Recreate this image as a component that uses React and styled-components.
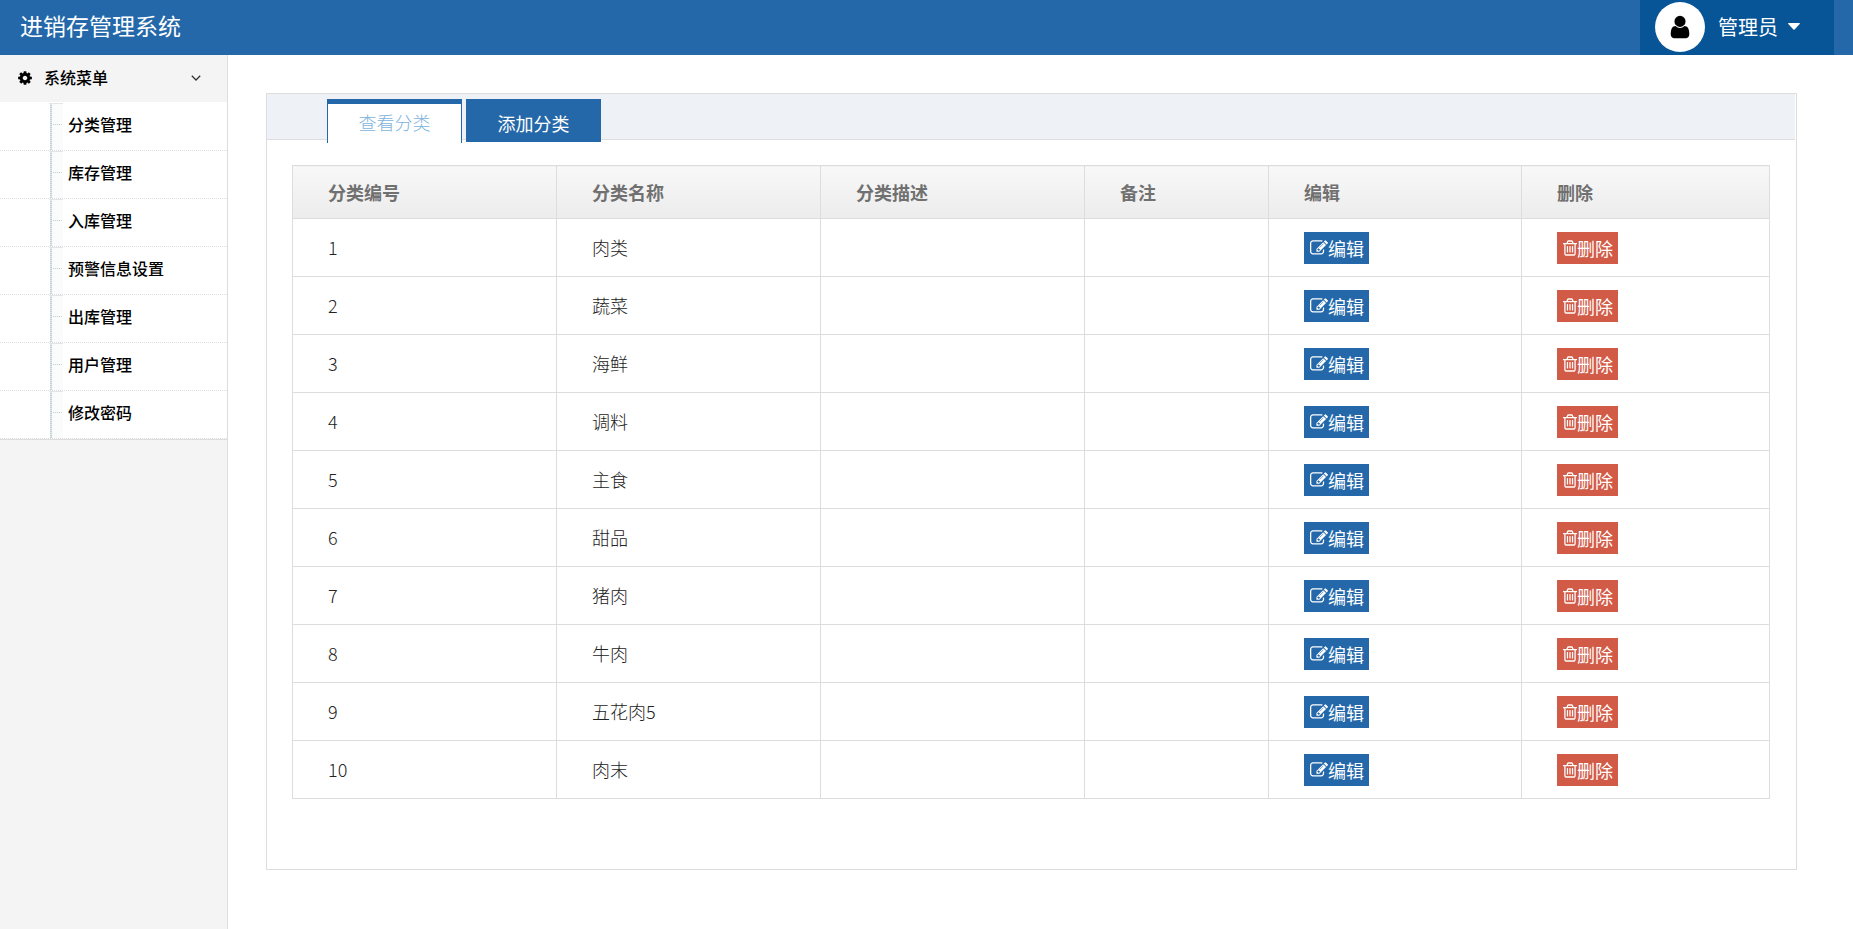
import React, { useState } from 'react'
import styled, { createGlobalStyle } from 'styled-components'

const menus = ['分类管理', '库存管理', '入库管理', '预警信息设置', '出库管理', '用户管理', '修改密码']
const tabs = ['查看分类', '添加分类']
const columns = [
  { title: '分类编号', width: 264 },
  { title: '分类名称', width: 264 },
  { title: '分类描述', width: 264 },
  { title: '备注', width: 184 },
  { title: '编辑', width: 253 },
  { title: '删除', width: 248 },
]
const categories = ['肉类', '蔬菜', '海鲜', '调料', '主食', '甜品', '猪肉', '牛肉', '五花肉5', '肉末']

const CogIcon = () => (
  <svg width="16" height="16" viewBox="0 0 1792 1792" fill="currentColor" aria-hidden="true">
    <path d="M1152 896q0-106-75-181t-181-75-181 75-75 181 75 181 181 75 181-75 75-181zm512-109v222q0 12-8 23t-20 13l-185 28q-19 54-39 91 35 50 107 138 10 12 10 25t-9 23q-27 37-99 108t-94 71q-12 0-26-9l-138-108q-44 23-91 38-16 136-29 186-7 28-36 28h-222q-14 0-24.5-8.5t-11.5-21.5l-28-184q-49-16-90-37l-141 107q-10 9-25 9-14 0-25-11-126-114-165-168-7-10-7-23 0-12 8-23 15-21 51-66.5t54-70.5q-27-50-41-99l-183-27q-13-2-21-12.5t-8-23.5v-222q0-12 8-23t19-13l186-28q14-46 39-92-40-57-107-138-10-12-10-24 0-10 9-23 26-36 98.5-107.5t94.5-71.5q13 0 26 10l138 107q44-23 91-38 16-136 29-186 7-28 36-28h222q14 0 24.5 8.5t11.5 21.5l28 184q49 16 90 37l142-107q9-9 24-9 13 0 25 10 129 119 165 170 7 8 7 22 0 12-8 23-15 21-51 66.5t-54 70.5q26 50 41 98l183 28q13 2 21 12.5t8 23.5z" />
  </svg>
)

const AngleIcon = () => (
  <svg width="10" height="6" viewBox="0 0 10 6" fill="none" stroke="#333" strokeWidth="1.3" aria-hidden="true">
    <path d="M0.8 0.8L5 5L9.2 0.8" />
  </svg>
)

const UserIcon = () => (
  <svg width="26" height="26" viewBox="0 0 1792 1792" fill="#000" aria-hidden="true">
    <path d="M1536 1399q0 109-62.5 187t-150.5 78h-854q-88 0-150.5-78t-62.5-187q0-85 8.5-160.5t31.5-152 58.5-131 94-89 134.5-34.5q131 128 313 128t313-128q76 0 134.5 34.5t94 89 58.5 131 31.5 152 8.5 160.5zm-256-887q0 159-112.5 271.5t-271.5 112.5-271.5-112.5-112.5-271.5 112.5-271.5 271.5-112.5 271.5 112.5 112.5 271.5z" />
  </svg>
)

const CaretIcon = () => (
  <svg width="12" height="7" viewBox="0 0 12 7" fill="currentColor" aria-hidden="true">
    <path d="M0.7 0H11.3Q12.3 0.3 11.7 1L6.6 6.5Q6 7 5.4 6.5L0.3 1Q-0.3 0.3 0.7 0z" />
  </svg>
)

const EditIcon = () => (
  <svg width="18" height="18" viewBox="0 0 1792 1792" fill="currentColor" aria-hidden="true">
    <path d="M888 1184l116-116-152-152-116 116v56h96v96h56zm440-720q-16-16-33 1l-350 350q-17 17-1 33t33-1l350-350q17-17 1-33zm80 594v190q0 119-84.5 203.5t-203.5 84.5h-832q-119 0-203.5-84.5t-84.5-203.5v-832q0-119 84.5-203.5t203.5-84.5h832q63 0 117 25 15 7 18 23 3 17-9 29l-49 49q-14 14-32 8-23-6-45-6h-832q-66 0-113 47t-47 113v832q0 66 47 113t113 47h832q66 0 113-47t47-113v-126q0-13 9-22l64-64q15-15 35-7t20 29zm-96-738l288 288-672 672h-288v-288zm444 132l-92 92-288-288 92-92q28-28 68-28t68 28l152 152q28 28 28 68t-28 68z" />
  </svg>
)

const TrashIcon = () => (
  <svg width="14" height="18" viewBox="192 0 1408 1792" fill="currentColor" aria-hidden="true">
    <path d="M704 736v576q0 14-9 23t-23 9h-64q-14 0-23-9t-9-23v-576q0-14 9-23t23-9h64q14 0 23 9t9 23zm256 0v576q0 14-9 23t-23 9h-64q-14 0-23-9t-9-23v-576q0-14 9-23t23-9h64q14 0 23 9t9 23zm256 0v576q0 14-9 23t-23 9h-64q-14 0-23-9t-9-23v-576q0-14 9-23t23-9h64q14 0 23 9t9 23zm128 724v-948h-896v948q0 22 7 40.5t14.5 27 10.5 8.5h832q3 0 10.5-8.5t14.5-27 7-40.5zm-672-1076h448l-48-117q-7-9-17-11h-317q-10 2-17 11zm928 32v64q0 14-9 23t-23 9h-96v948q0 83-47 143.5t-113 60.5h-832q-66 0-113-58.5t-47-141.5v-952h-96q-14 0-23-9t-9-23v-64q0-14 9-23t23-9h309l70-167q15-37 54-63t79-26h320q40 0 79 26t54 63l70 167h309q14 0 23 9t9 23z" />
  </svg>
)

const App = () => {
  const [current, setCurrent] = useState(0)
  const [open, setOpen] = useState(true)

  return (
    <Page>
      <GlobalStyle />
      <Header>
        <Title>进销存管理系统</Title>
        <UserMenu type="button">
          <Avatar>
            <UserIcon />
          </Avatar>
          管理员
          <CaretIcon />
        </UserMenu>
      </Header>
      <Body>
        <Sidebar>
          <MenuHead type="button" aria-expanded={open} onClick={() => setOpen(!open)}>
            <CogIcon />
            <MenuLabel>系统菜单</MenuLabel>
            <AngleIcon />
          </MenuHead>
          {open && (
            <SubMenu>
              {menus.map((menu) => (
                <SubItem key={menu}>
                  <SubLink href="#">{menu}</SubLink>
                </SubItem>
              ))}
            </SubMenu>
          )}
        </Sidebar>
        <Main>
          <Panel>
            <TabBar role="tablist">
              {tabs.map((tab, i) => (
                <Tab key={tab} type="button" role="tab" aria-selected={i === current} $active={i === current} onClick={() => setCurrent(i)}>
                  {tab}
                </Tab>
              ))}
            </TabBar>
            <PanelBody>
              <Table>
                <colgroup>
                  {columns.map((col) => (
                    <col key={col.title} width={col.width} />
                  ))}
                </colgroup>
                <thead>
                  <tr>
                    {columns.map((col) => (
                      <Th key={col.title}>{col.title}</Th>
                    ))}
                  </tr>
                </thead>
                <tbody>
                  {categories.map((name, i) => (
                    <tr key={name}>
                      <Td>{i + 1}</Td>
                      <Td>{name}</Td>
                      <Td />
                      <Td />
                      <Td>
                        <ActionButton type="button" $color="#2468a9">
                          <EditIcon />
                          编辑
                        </ActionButton>
                      </Td>
                      <Td>
                        <ActionButton type="button" $color="#d15b47">
                          <TrashIcon />
                          删除
                        </ActionButton>
                      </Td>
                    </tr>
                  ))}
                </tbody>
              </Table>
            </PanelBody>
          </Panel>
        </Main>
      </Body>
    </Page>
  )
}

export default App

const GlobalStyle = createGlobalStyle`
  * {
    box-sizing: border-box;
  }
  body {
    margin: 0;
    background: #fff;
  }
  body, button {
    font-family: "Noto Sans CJK SC", sans-serif;
    font-weight: 400;
  }
  button {
    border: 0;
    cursor: pointer;
  }
  svg {
    display: block;
    flex: none;
  }
`
const Page = styled.div`
  min-height: 100vh;
  display: flex;
  flex-direction: column;
`
const Header = styled.header`
  height: 55px;
  padding: 0 19px 0 20px;
  display: flex;
  justify-content: space-between;
  align-items: center;
  background: #2468a9;
  color: #fff;
`
const Title = styled.h1`
  margin: 0;
  padding-bottom: 6px;
  font-size: 23px;
  font-weight: 400;
  line-height: 32px;
`
const UserMenu = styled.button`
  width: 194px;
  height: 55px;
  padding: 0 15px 2px;
  display: flex;
  align-items: center;
  gap: 10px;
  background: #075597;
  color: #fff;
  font-size: 20px;
`
const Avatar = styled.span`
  width: 50px;
  height: 50px;
  margin-right: 3px;
  display: flex;
  justify-content: center;
  align-items: center;
  border-radius: 50%;
  background: #fff;
`
const Body = styled.div`
  flex: 1;
  display: flex;
`
const Sidebar = styled.nav`
  width: 228px;
  flex: none;
  border-right: 1px solid #ddd;
  background: #f4f4f4;
`
const MenuHead = styled.button`
  width: 100%;
  height: 47px;
  padding: 0 26px 2px 17px;
  display: flex;
  align-items: center;
  gap: 11px;
  background: #f4f4f4;
  color: #000;
`
const MenuLabel = styled.span`
  flex: 1;
  padding-bottom: 2px;
  text-align: left;
  font-size: 16px;
  font-weight: 500;
`
const SubMenu = styled.ul`
  margin: 0;
  padding: 1px 0 0;
  border-bottom: 1px solid #ddd;
  list-style: none;
  background: #fff;
`
const SubItem = styled.li`
  border-bottom: 1px dotted #ddd;
`
/* tree line on the left: trunk, top stub and middle branch */
const SubLink = styled.a`
  height: 47px;
  padding: 0 0 5px 68px;
  display: flex;
  align-items: center;
  background:
    linear-gradient(#e3e6e6, #e3e6e6) 49px 0 / 14px 1px no-repeat,
    repeating-linear-gradient(90deg, #c8d2d4 0 1px, #eef2f2 1px 2px) 53px 21px / 9px 1px no-repeat,
    repeating-linear-gradient(#c3d3d5 0 1px, #dfe9ea 1px 2px) 50px 0 / 2px 100% no-repeat,
    linear-gradient(#fafcfc, #fafcfc) 52px 0 / 11px 100% no-repeat;
  color: #000;
  font-size: 16px;
  font-weight: 500;
  text-decoration: none;
`
const Main = styled.main`
  flex: 1;
  min-width: 0;
  padding: 38px 56px 38px 38px;
`
const Panel = styled.section`
  border: 1px solid #ddd;
`
const TabBar = styled.div`
  height: 46px;
  margin-right: 1px;
  padding: 5px 60px 0;
  display: flex;
  align-items: flex-start;
  gap: 4px;
  border-bottom: 1px solid #ddd;
  background: #eef2f7;
`
const Tab = styled.button`
  width: 135px;
  height: ${(p) => (p.$active ? '44px' : '43px')};
  padding: ${(p) => (p.$active ? '0 0 3px' : '4px 0 0')};
  border: solid #2468a9;
  border-width: ${(p) => (p.$active ? '5px 1px 0' : '0')};
  background: ${(p) => (p.$active ? '#fff' : '#2468a9')};
  color: ${(p) => (p.$active ? '#7db4dc' : '#fff')};
  font-size: 18px;
  font-weight: ${(p) => (p.$active ? 300 : 400)};
`
const PanelBody = styled.div`
  padding: 25px 26px 70px 25px;
`
const Table = styled.table`
  width: 100%;
  table-layout: fixed;
  border-collapse: collapse;
  color: #222;
  font-size: 18px;
  font-weight: 300;
`
const Th = styled.th`
  height: 53px;
  padding: 0 35px;
  border: 1px solid #ddd;
  background: linear-gradient(#f8f8f8, #ececec);
  color: #707070;
  font-weight: 700;
  text-align: left;
`
const Td = styled.td`
  height: 58px;
  padding: 0 35px 2px;
  border: 1px solid #ddd;
`
const ActionButton = styled.button`
  height: 32px;
  margin-top: 2px;
  padding: 0 5px 0 6px;
  display: flex;
  align-items: center;
  background: ${(p) => p.$color};
  color: #fff;
  font-size: 18px;
  white-space: nowrap;
`
